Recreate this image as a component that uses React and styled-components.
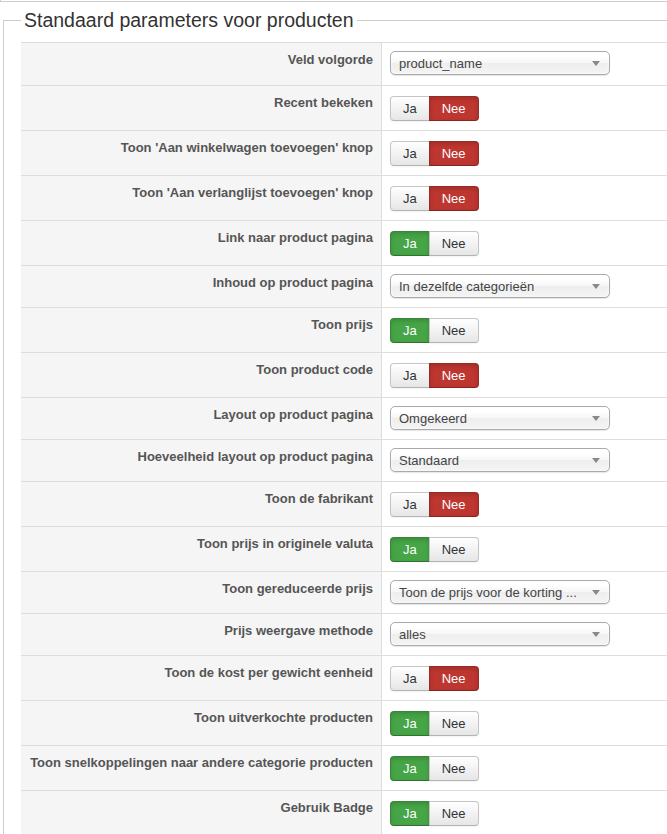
import styled, { createGlobalStyle } from 'styled-components';

const GlobalStyle = createGlobalStyle`
  html, body {
    margin: 0;
    padding: 0;
    background: #fff;
    overflow: hidden;
  }
  body {
    font-family: "Liberation Sans", Arial, sans-serif;
    font-size: 13px;
    color: #333;
  }
`;

const rows = [
  { label: 'Veld volgorde', select: 'product_name' },
  { label: 'Recent bekeken', value: false },
  { label: "Toon 'Aan winkelwagen toevoegen' knop", value: false },
  { label: "Toon 'Aan verlanglijst toevoegen' knop", value: false },
  { label: 'Link naar product pagina', value: true },
  { label: 'Inhoud op product pagina', select: 'In dezelfde categorieën' },
  { label: 'Toon prijs', value: true },
  { label: 'Toon product code', value: false },
  { label: 'Layout op product pagina', select: 'Omgekeerd' },
  { label: 'Hoeveelheid layout op product pagina', select: 'Standaard' },
  { label: 'Toon de fabrikant', value: false },
  { label: 'Toon prijs in originele valuta', value: true },
  { label: 'Toon gereduceerde prijs', select: 'Toon de prijs voor de korting ...' },
  { label: 'Prijs weergave methode', select: 'alles' },
  { label: 'Toon de kost per gewicht eenheid', value: false },
  { label: 'Toon uitverkochte producten', value: true },
  { label: 'Toon snelkoppelingen naar andere categorie producten', value: true },
  { label: 'Gebruik Badge', value: true },
];

function App() {
  return (
    <>
      <GlobalStyle />
      <Page>
        <PrevPanel />
        <Fieldset>
          <Legend>Standaard parameters voor producten</Legend>
          <ParamTable>
            {rows.map((row, i) => (
              <Row key={row.label}>
                <LabelCell>{row.label}</LabelCell>
                <ValueCell>
                  {row.select !== undefined ? (
                    <Select $first={i === 0}>
                      <SelectText>{row.select}</SelectText>
                      <Caret />
                    </Select>
                  ) : (
                    <YesNo>
                      <ToggleButton $active={row.value} $tone="yes">Ja</ToggleButton>
                      <ToggleButton $active={!row.value} $tone="no">Nee</ToggleButton>
                    </YesNo>
                  )}
                </ValueCell>
              </Row>
            ))}
          </ParamTable>
        </Fieldset>
      </Page>
    </>
  );
}

export default App;

const Page = styled.div`
  width: 700px;
`;

const PrevPanel = styled.div`
  height: 1px;
  border: 1px solid #ccc;
  border-top: none;
`;

const Fieldset = styled.fieldset`
  margin: 6px 0 0 3px;
  padding: 10px 0 0 17px;
  border: 1px solid #ccc;
  min-width: 0;
`;

const Legend = styled.legend`
  padding: 0 3px;
  font-size: 19.5px;
  line-height: 24px;
  color: #333;
`;

const ParamTable = styled.div`
  display: grid;
  grid-template-columns: 360px 1fr;
`;

const Row = styled.div`
  display: contents;
`;

const LabelCell = styled.div`
  background: #f5f5f5;
  border-top: 1px solid #ddd;
  padding: 8px 8px 0 0;
  text-align: right;
  white-space: nowrap;
  font-weight: bold;
  line-height: 18px;
  color: #555;
`;

const ValueCell = styled.div`
  border-top: 1px solid #ddd;
  border-left: 1px solid #ddd;
  padding: 8px;
  display: flex;
  align-items: flex-start;
`;

const Select = styled.div`
  box-sizing: border-box;
  width: 220px;
  height: 24px;
  margin-bottom: ${(p) => (p.$first ? '2px' : '1px')};
  padding: 1px 26px 0 8px;
  position: relative;
  display: flex;
  align-items: center;
  border: 1px solid #aaa;
  border-radius: 5px;
  background: linear-gradient(#fff 20%, #f6f6f6 50%, #eee 52%, #f4f4f4 100%);
  box-shadow: inset 0 0 3px #fff, 0 1px 1px rgba(0, 0, 0, 0.1);
  color: #444;
`;

const SelectText = styled.span`
  white-space: nowrap;
  overflow: hidden;
  text-overflow: ellipsis;
`;

const Caret = styled.span`
  position: absolute;
  right: 9px;
  top: 9px;
  border-left: 4px solid transparent;
  border-right: 4px solid transparent;
  border-top: 5px solid #888;
`;

const YesNo = styled.div`
  display: flex;
  padding: 2px 0 1px;
`;

const toneColor = { yes: '#46a546', no: '#bd362f' };

const ToggleButton = styled.span`
  box-sizing: border-box;
  height: 25px;
  padding: 0 12px;
  display: flex;
  align-items: center;
  font-size: 13px;
  border: 1px solid ${(p) => (p.$active ? 'rgba(0, 0, 0, 0.2)' : '#c5c5c5')};
  border-bottom-color: ${(p) => (p.$active ? 'rgba(0, 0, 0, 0.3)' : '#b3b3b3')};
  background: ${(p) =>
    p.$active ? toneColor[p.$tone] : 'linear-gradient(#fff, #e6e6e6)'};
  color: ${(p) => (p.$active ? '#fff' : '#333')};
  box-shadow: ${(p) =>
    p.$active
      ? 'inset 0 2px 4px rgba(0, 0, 0, 0.15)'
      : 'inset 0 1px 0 rgba(255, 255, 255, 0.2), 0 1px 2px rgba(0, 0, 0, 0.05)'};

  &:first-child {
    border-radius: 4px 0 0 4px;
  }
  &:last-child {
    border-radius: 0 4px 4px 0;
    margin-left: -1px;
  }
`;
